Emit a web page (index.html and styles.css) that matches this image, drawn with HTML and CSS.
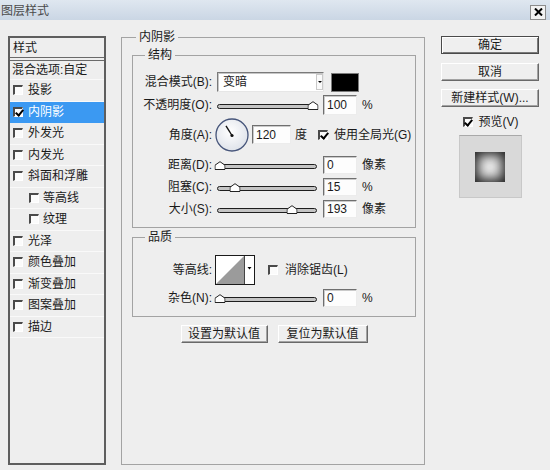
FILE: index.html
```html
<!DOCTYPE html>
<html lang="zh-CN">
<head>
<meta charset="utf-8">
<title>图层样式</title>
<link rel="stylesheet" href="styles.css">
</head>
<body>
<div class="dialog">
  <div class="titlebar">
    <span class="title">图层样式</span>
    <span class="close"><svg width="9" height="8" viewBox="0 0 9 8"><path d="M1 0.5 L8 7.5 M8 0.5 L1 7.5" stroke="#000" stroke-width="2" fill="none"/></svg></span>
  </div>
  <div class="body">
    <div class="stylelist">
      <div class="list-head">样式</div>
      <div class="list-row blend">混合选项:自定</div>
      <div class="list-row"><span class="cb"></span>投影</div>
      <div class="list-row selected"><span class="cb checked"></span>内阴影</div>
      <div class="list-row"><span class="cb"></span>外发光</div>
      <div class="list-row"><span class="cb"></span>内发光</div>
      <div class="list-row"><span class="cb"></span>斜面和浮雕</div>
      <div class="list-row sub-item"><span class="cb"></span>等高线</div>
      <div class="list-row sub-item"><span class="cb"></span>纹理</div>
      <div class="list-row"><span class="cb"></span>光泽</div>
      <div class="list-row"><span class="cb"></span>颜色叠加</div>
      <div class="list-row"><span class="cb"></span>渐变叠加</div>
      <div class="list-row"><span class="cb"></span>图案叠加</div>
      <div class="list-row"><span class="cb"></span>描边</div>
    </div>

    <fieldset class="group main">
      <legend class="legend-main">内阴影</legend>

      <fieldset class="group sub structure">
        <legend class="legend-sub">结构</legend>
        <div class="row r1">
          <span class="lbl">混合模式(B):</span>
          <div class="select"><span class="select-val">变暗</span><span class="select-arrow"><span class="tri"></span></span></div>
          <span class="swatch"></span>
        </div>
        <div class="row r2">
          <span class="lbl">不透明度(O):</span>
          <div class="slider"><div class="track"><svg class="thumb" style="left:97%" width="11" height="9" viewBox="0 0 11 9"><path d="M0.5 8.5 V4.2 L5.5 0.7 L10.5 4.2 V8.5 Z" fill="#fff" stroke="#222"/></svg></div></div>
          <span class="field">100</span>
          <span class="unit">%</span>
        </div>
        <div class="row r3">
          <span class="lbl">角度(A):</span>
          <svg class="dial" width="34" height="34" viewBox="0 0 34 34">
            <defs>
              <radialGradient id="dg" cx="45%" cy="40%" r="60%">
                <stop offset="0" stop-color="#ffffff"/>
                <stop offset="1" stop-color="#dfe3ea"/>
              </radialGradient>
            </defs>
            <circle cx="17" cy="17" r="16" fill="url(#dg)" stroke="#46557a" stroke-width="1.3"/>
            <line x1="17" y1="17.5" x2="11" y2="7.8" stroke="#111" stroke-width="1.4"/>
            <circle cx="17" cy="17.5" r="1.6" fill="#111"/>
          </svg>
          <span class="field angle">120</span>
          <span class="unit deg">度</span>
          <span class="cb checked global"></span>
          <span class="cb-text">使用全局光(G)</span>
        </div>
        <div class="row r4">
          <span class="lbl">距离(D):</span>
          <div class="slider"><div class="track"><svg class="thumb" style="left:2%" width="11" height="9" viewBox="0 0 11 9"><path d="M0.5 8.5 V4.2 L5.5 0.7 L10.5 4.2 V8.5 Z" fill="#fff" stroke="#222"/></svg></div></div>
          <span class="field small">0</span>
          <span class="unit">像素</span>
        </div>
        <div class="row r5">
          <span class="lbl">阻塞(C):</span>
          <div class="slider"><div class="track"><svg class="thumb" style="left:17%" width="11" height="9" viewBox="0 0 11 9"><path d="M0.5 8.5 V4.2 L5.5 0.7 L10.5 4.2 V8.5 Z" fill="#fff" stroke="#222"/></svg></div></div>
          <span class="field small">15</span>
          <span class="unit">%</span>
        </div>
        <div class="row r6">
          <span class="lbl">大小(S):</span>
          <div class="slider"><div class="track"><svg class="thumb" style="left:76%" width="11" height="9" viewBox="0 0 11 9"><path d="M0.5 8.5 V4.2 L5.5 0.7 L10.5 4.2 V8.5 Z" fill="#fff" stroke="#222"/></svg></div></div>
          <span class="field small">193</span>
          <span class="unit">像素</span>
        </div>
      </fieldset>

      <fieldset class="group sub quality">
        <legend class="legend-sub">品质</legend>
        <div class="row q1">
          <span class="lbl">等高线:</span>
          <svg class="contour" width="40" height="30" viewBox="0 0 40 30">
            <rect x="0.5" y="0.5" width="39" height="29" fill="#fff" stroke="#1a1a1a"/>
            <polygon points="1,29 29,1 29,29" fill="#9b9b9b"/>
            <line x1="29.5" y1="1" x2="29.5" y2="29" stroke="#444"/>
            <polygon points="32.5,12 36.5,12 34.5,14.5" fill="#000"/>
          </svg>
          <span class="cb aa"></span>
          <span class="cb-text">消除锯齿(L)</span>
        </div>
        <div class="row q2">
          <span class="lbl">杂色(N):</span>
          <div class="slider"><div class="track"><svg class="thumb" style="left:2%" width="11" height="9" viewBox="0 0 11 9"><path d="M0.5 8.5 V4.2 L5.5 0.7 L10.5 4.2 V8.5 Z" fill="#fff" stroke="#222"/></svg></div></div>
          <span class="field small">0</span>
          <span class="unit">%</span>
        </div>
      </fieldset>

      <div class="defaults">
        <span class="btn b-set">设置为默认值</span>
        <span class="btn b-reset">复位为默认值</span>
      </div>
    </fieldset>

    <div class="actions">
      <span class="btn default">确定</span>
      <span class="btn cancel">取消</span>
      <span class="btn newstyle">新建样式(W)...</span>
      <div class="preview-row"><span class="cb checked"></span><span class="cb-text">预览(V)</span></div>
      <div class="preview-box"><div class="preview-swatch"></div></div>
    </div>
  </div>
</div>
</body>
</html>
```

FILE: styles.css
```css
* { box-sizing: border-box; }
html, body { margin: 0; padding: 0; }
body {
  width: 550px;
  height: 470px;
  overflow: hidden;
  background: #eeeeee;
  color: #1a1a1a;
  font: 12px/14px "Liberation Sans", "Noto Sans CJK SC", sans-serif;
}
.dialog { width: 550px; height: 470px; }

/* title bar */
.titlebar {
  height: 20px;
  display: flex;
  align-items: center;
  justify-content: space-between;
  padding: 0 4px 0 1px;
  background: linear-gradient(#dfe7f0, #cad6e4);
}
.title { color: #4a4a4a; margin-top: 1px; }
.close {
  width: 16px;
  height: 15px;
  margin-top: 4px;
  display: flex;
  align-items: center;
  justify-content: center;
  background: #f2f2f2;
  border: 1px solid #8c8c8c;
}

.body { display: flex; align-items: flex-start; padding-left: 8px; }

/* left style list */
.stylelist {
  flex: none;
  width: 98px;
  height: 429px;
  margin-top: 16px;
  border: 2px solid #5e5e5e;
  background: #eeeeee;
}
.list-head {
  height: 23px;
  padding: 0 0 0 3px;
  display: flex;
  align-items: center;
  border-bottom: 4px double #6a6a6a;
}
.list-row {
  height: 21.5px;
  display: flex;
  align-items: center;
  gap: 5px;
  padding-left: 3px;
  border-bottom: 1px solid #f9f9f9;
}
.list-row.blend { height: 19px; padding-left: 2px; }
.list-row.sub-item { padding-left: 19px; gap: 4px; }
.list-row.selected { background: #3b99f2; color: #fff; border-bottom-color: #3b99f2; }

/* classic checkbox */
.cb {
  position: relative;
  flex: none;
  width: 10px;
  height: 10px;
  background: #fbfbfb;
  border-top: 2px solid #4a4a4a;
  border-left: 2px solid #4a4a4a;
  border-right: 1px solid #ffffff;
  border-bottom: 1px solid #ffffff;
}
.selected .cb { background: #ffffff; }
.cb.checked::after {
  content: "";
  position: absolute;
  left: 1.5px;
  top: -0.5px;
  width: 3px;
  height: 6px;
  border-right: 2px solid #000;
  border-bottom: 2px solid #000;
  transform: rotate(40deg);
}

/* group boxes */
fieldset {
  margin: 0;
  min-inline-size: 0;
  border: 1px solid #a3a3a3;
}
legend { padding: 0 3px; line-height: 14px; }
.group.main {
  flex: none;
  width: 304px;
  height: 435px;
  margin: 10px 0 0 15px;
  padding: 4px 8px 0 10px;
}
.legend-main { margin-left: 4px; }
.legend-sub { margin-left: 12px; }
.group.structure { width: 284px; padding: 10px 0 7px 0; }
.group.quality { width: 284px; margin-top: 2px; padding: 11px 0 7px 0; }

/* rows */
.row { display: flex; align-items: center; }
.lbl { width: 79px; margin-right: 4px; text-align: right; flex: none; }
.r1 { height: 20px; }
.r2 { height: 25px; }
.r3 { height: 35px; }
.r4 { height: 22px; margin-top: 2px; }
.r5, .r6 { height: 22px; }
.q1 { height: 30px; }
.q2 { height: 22px; margin-top: 2px; }

.select {
  width: 107px;
  height: 20px;
  margin-left: 1px;
  display: flex;
  align-items: stretch;
  background: #fff;
  border: 1px solid;
  border-color: #7a7a7a #e6e6e6 #e6e6e6 #7a7a7a;
  box-shadow: inset 1px 1px 0 #c6c6c6;
}
.select-val { flex: 1; padding-left: 5px; display: flex; align-items: center; }
.select-arrow {
  width: 7px;
  margin: 1px 0;
  border: 1px solid #c9c9c9;
  background: #fafafa;
  display: flex;
  align-items: center;
  justify-content: center;
}
.tri { width: 0; height: 0; border-left: 2px solid transparent; border-right: 2px solid transparent; border-top: 2px solid #000; }
.swatch { width: 28px; height: 19px; margin-left: 7px; background: #000; border: 1px solid #7c7c7c; }

.slider { width: 102px; height: 12px; display: flex; align-items: center; flex: none; }
.track {
  position: relative;
  width: 100px;
  height: 5px;
  margin-left: 1px;
  margin-top: 3px;
  border: 1px solid #1e1e1e;
  border-radius: 3px;
  background: #c4c4c4;
}
.thumb { position: absolute; bottom: -2px; transform: translateX(-50%); display: block; }

.field {
  width: 34px;
  height: 20px;
  margin-left: 5px;
  padding-left: 3px;
  display: flex;
  align-items: center;
  background: #fdfdfd;
  border: 1px solid;
  border-color: #6f6f6f #ececec #ececec #6f6f6f;
  box-shadow: inset 1px 1px 0 #cacaca;
}
.field.small { height: 18px; }
.field.angle { width: 39px; height: 19px; margin-left: 3px; }
.unit { margin-left: 5px; }
.unit.deg { margin-left: 4px; }
.dial { display: block; flex: none; margin-left: -1px; }
.cb.global { margin-left: 11px; }
.cb-text { margin-left: 6px; }
.contour { display: block; flex: none; margin-left: -1px; }
.cb.aa { margin-left: 13px; }
.q1 .cb-text { margin-left: 7px; }

/* buttons */
.btn {
  height: 18px;
  display: flex;
  align-items: center;
  justify-content: center;
  background: #efefef;
  border: 1px solid;
  border-color: #ffffff #696969 #696969 #ffffff;
  box-shadow: inset -1px -1px 0 #a3a3a3;
}
.btn.default {
  border: 1px solid #4a4a4a;
  box-shadow: inset 1px 1px 0 #ffffff, inset -1px -1px 0 #7a7a7a;
}
.defaults { display: flex; justify-content: center; gap: 10px; margin-top: 8px; }
.b-set { width: 87px; }
.b-reset { width: 90px; }

.actions { flex: none; width: 98px; margin: 16px 0 0 16px; display: flex; flex-direction: column; align-items: center; }
.actions .btn { width: 98px; }
.cancel { margin-top: 9px; }
.newstyle { margin-top: 8px; }
.preview-row { height: 19px; margin-top: 5px; display: flex; align-items: center; padding-left: 1px; }
.preview-box {
  width: 63px;
  height: 63px;
  margin-top: 4px;
  background: #d9d9d9;
  border: 1px solid #c8c8c8;
  border-top-color: #a9a9a9;
  display: flex;
  align-items: center;
  justify-content: center;
}
.preview-swatch {
  width: 30px;
  height: 30px;
  background: #eaeaea;
  box-shadow: inset 0 0 12px 3px rgba(0, 0, 0, 0.88);
}
```
